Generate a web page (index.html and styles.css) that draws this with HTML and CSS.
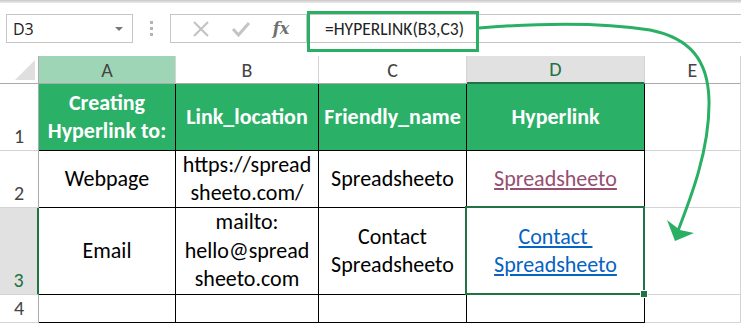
FILE: index.html
```html
<!DOCTYPE html>
<html lang="en">

<head>
  <meta charset="UTF-8">
  <title>HYPERLINK function</title>
  <link rel="stylesheet" href="styles.css">
</head>

<body>
  <div class="topline"></div>

  <div class="toolbar">
    <div class="name-box">
      <span>D3</span>
      <span class="caret"></span>
    </div>
    <div class="grip"><i></i><i></i><i></i></div>
    <div class="fx-buttons">
      <svg class="btn" width="18" height="18" viewBox="0 0 18 18">
        <path d="M2 2 L16 16 M16 2 L2 16" stroke="#c4c4c4" stroke-width="2.2" fill="none"/>
      </svg>
      <svg class="btn" width="20" height="18" viewBox="0 0 20 18">
        <path d="M2 9 L7.5 15 L18 3" stroke="#c4c4c4" stroke-width="3" fill="none"/>
      </svg>
      <span class="fx">fx</span>
    </div>
    <div class="formula">
      <span class="formula-text">=HYPERLINK(B3,C3)</span>
    </div>
  </div>

  <div class="sheet">
    <div class="corner"><span></span></div>
    <div class="col-head active">A</div>
    <div class="col-head">B</div>
    <div class="col-head">C</div>
    <div class="col-head selected">D</div>
    <div class="col-head">E</div>

    <div class="row-head">1</div>
    <div class="cell head">Creating<br>Hyperlink to:</div>
    <div class="cell head">Link_location</div>
    <div class="cell head">Friendly_name</div>
    <div class="cell head">Hyperlink</div>
    <div class="cell empty"></div>

    <div class="row-head">2</div>
    <div class="cell">Webpage</div>
    <div class="cell">https://spread<br>sheeto.com/</div>
    <div class="cell">Spreadsheeto</div>
    <div class="cell"><a class="link visited" href="#">Spreadsheeto</a></div>
    <div class="cell empty"></div>

    <div class="row-head selected">3</div>
    <div class="cell">Email</div>
    <div class="cell">mailto:<br>hello@spread<br>sheeto.com</div>
    <div class="cell">Contact<br>Spreadsheeto</div>
    <div class="cell current"><a class="link" href="#">Contact&nbsp;<br>Spreadsheeto</a></div>
    <div class="cell empty"></div>

    <div class="row-head">4</div>
    <div class="cell"></div>
    <div class="cell"></div>
    <div class="cell"></div>
    <div class="cell"></div>
    <div class="cell empty"></div>
  </div>

  <!-- annotation: box round the formula and arrow to D3 -->
  <svg class="annotation" width="741" height="325" viewBox="0 0 741 325">
    <rect x="308.5" y="12.5" width="169" height="38" fill="none" stroke="#29b065" stroke-width="3"/>
    <path d="M479 28 C 540 23, 600 22, 650 30 C 690 38, 708 60, 709 100 C 710 150, 690 200, 676 236"
      fill="none" stroke="#29b065" stroke-width="3"/>
    <path d="M667 220 L675 241 L694 233 L680 230 Z" fill="#29b065"/>
  </svg>
</body>

</html>
```

FILE: styles.css
```css
body {
  margin: 0;
  width: 741px;
  height: 325px;
  overflow: hidden;
  background-color: #ffffff;
  font-family: Carlito, Calibri, Lato, sans-serif;
  color: #000;
  position: relative;
}

.topline {
  height: 3px;
  background: linear-gradient(#c8c8c8, #ececec);
}

.toolbar {
  display: flex;
  align-items: flex-start;
  height: 53px;
  padding: 11px 0 0 6px;
  box-sizing: border-box;
}

.name-box {
  width: 127px;
  height: 29px;
  box-sizing: border-box;
  border: 1px solid #c6c6c6;
  display: flex;
  align-items: center;
  justify-content: space-between;
  padding: 0 9px 0 6px;
  font-family: "Open Sans", sans-serif;
  font-size: 16px;
  color: #222;
}

.caret {
  width: 0;
  height: 0;
  border-left: 4px solid transparent;
  border-right: 4px solid transparent;
  border-top: 4px solid #777;
}

.grip {
  width: 37px;
  height: 29px;
  display: flex;
  flex-direction: column;
  align-items: center;
  justify-content: center;
  gap: 3px;
}

.grip i {
  width: 3px;
  height: 3px;
  background: #b4b4b4;
}

.fx-buttons {
  width: 137px;
  height: 29px;
  box-sizing: border-box;
  border: 1px solid #c6c6c6;
  display: flex;
  align-items: center;
  justify-content: space-around;
  padding: 0 6px 0 10px;
}

.fx {
  font-family: "DejaVu Serif", "Liberation Serif", serif;
  font-style: italic;
  font-weight: bold;
  font-size: 16px;
  color: #6f6f6f;
}

.formula {
  flex: 1;
  height: 29px;
  box-sizing: border-box;
  border-top: 1px solid #c6c6c6;
  border-bottom: 1px solid #c6c6c6;
  display: flex;
  align-items: center;
  padding-left: 18px;
  font-size: 17.5px;
  color: #222;
}

.sheet {
  display: grid;
  grid-template-columns: 39px 137px 143px 148px 178px 1fr;
  grid-template-rows: 28px 67px 57px 87px 28px 10px;
}

.corner {
  position: relative;
  border-right: 1px solid #ababab;
  border-bottom: 1px solid #ababab;
  background: #fff;
}

.corner span {
  position: absolute;
  right: 3px;
  bottom: 3px;
  width: 0;
  height: 0;
  border-left: 20px solid transparent;
  border-bottom: 20px solid #dfdfdf;
}

.col-head {
  box-sizing: border-box;
  border-right: 1px solid #d4d4d4;
  border-bottom: 1px solid #ababab;
  display: flex;
  align-items: center;
  justify-content: center;
  font-size: 20px;
  color: #444;
}

.col-head.active {
  background-color: #9fd5b7;
}

.col-head.selected {
  background-color: #e1e1e1;
  border-bottom: 2px solid #217346;
  color: #217346;
}

.row-head {
  box-sizing: border-box;
  border-right: 1px solid #ababab;
  border-bottom: 1px solid #d4d4d4;
  display: flex;
  align-items: flex-end;
  justify-content: center;
  padding-bottom: 2px;
  font-size: 20px;
  color: #444;
}

.row-head.selected {
  background-color: #e1e1e1;
  border-right: 2px solid #217346;
  color: #217346;
}

.cell {
  box-sizing: border-box;
  border-right: 1px solid #000;
  border-bottom: 1px solid #000;
  display: flex;
  align-items: center;
  justify-content: center;
  text-align: center;
  font-size: 22px;
  line-height: 28.5px;
}

.cell.head {
  background-color: #2bb068;
  color: #fff;
  font-weight: bold;
}

.cell.empty {
  border-right: 1px solid #d4d4d4;
  border-bottom: 1px solid #d4d4d4;
}

.cell.current {
  position: relative;
}

.cell.current::after {
  content: '';
  position: absolute;
  left: -2px;
  top: -2px;
  right: -1px;
  bottom: -1px;
  border: 2px solid #217346;
}

.cell.current::before {
  content: '';
  position: absolute;
  right: -4px;
  bottom: -4px;
  width: 6px;
  height: 6px;
  background: #217346;
  border: 1px solid #fff;
  z-index: 1;
}

.link {
  color: #0563c1;
  text-decoration: underline;
  text-underline-offset: 2px;
}

.link.visited {
  color: #954f72;
}

.annotation {
  position: absolute;
  left: 0;
  top: 0;
  pointer-events: none;
}
```
